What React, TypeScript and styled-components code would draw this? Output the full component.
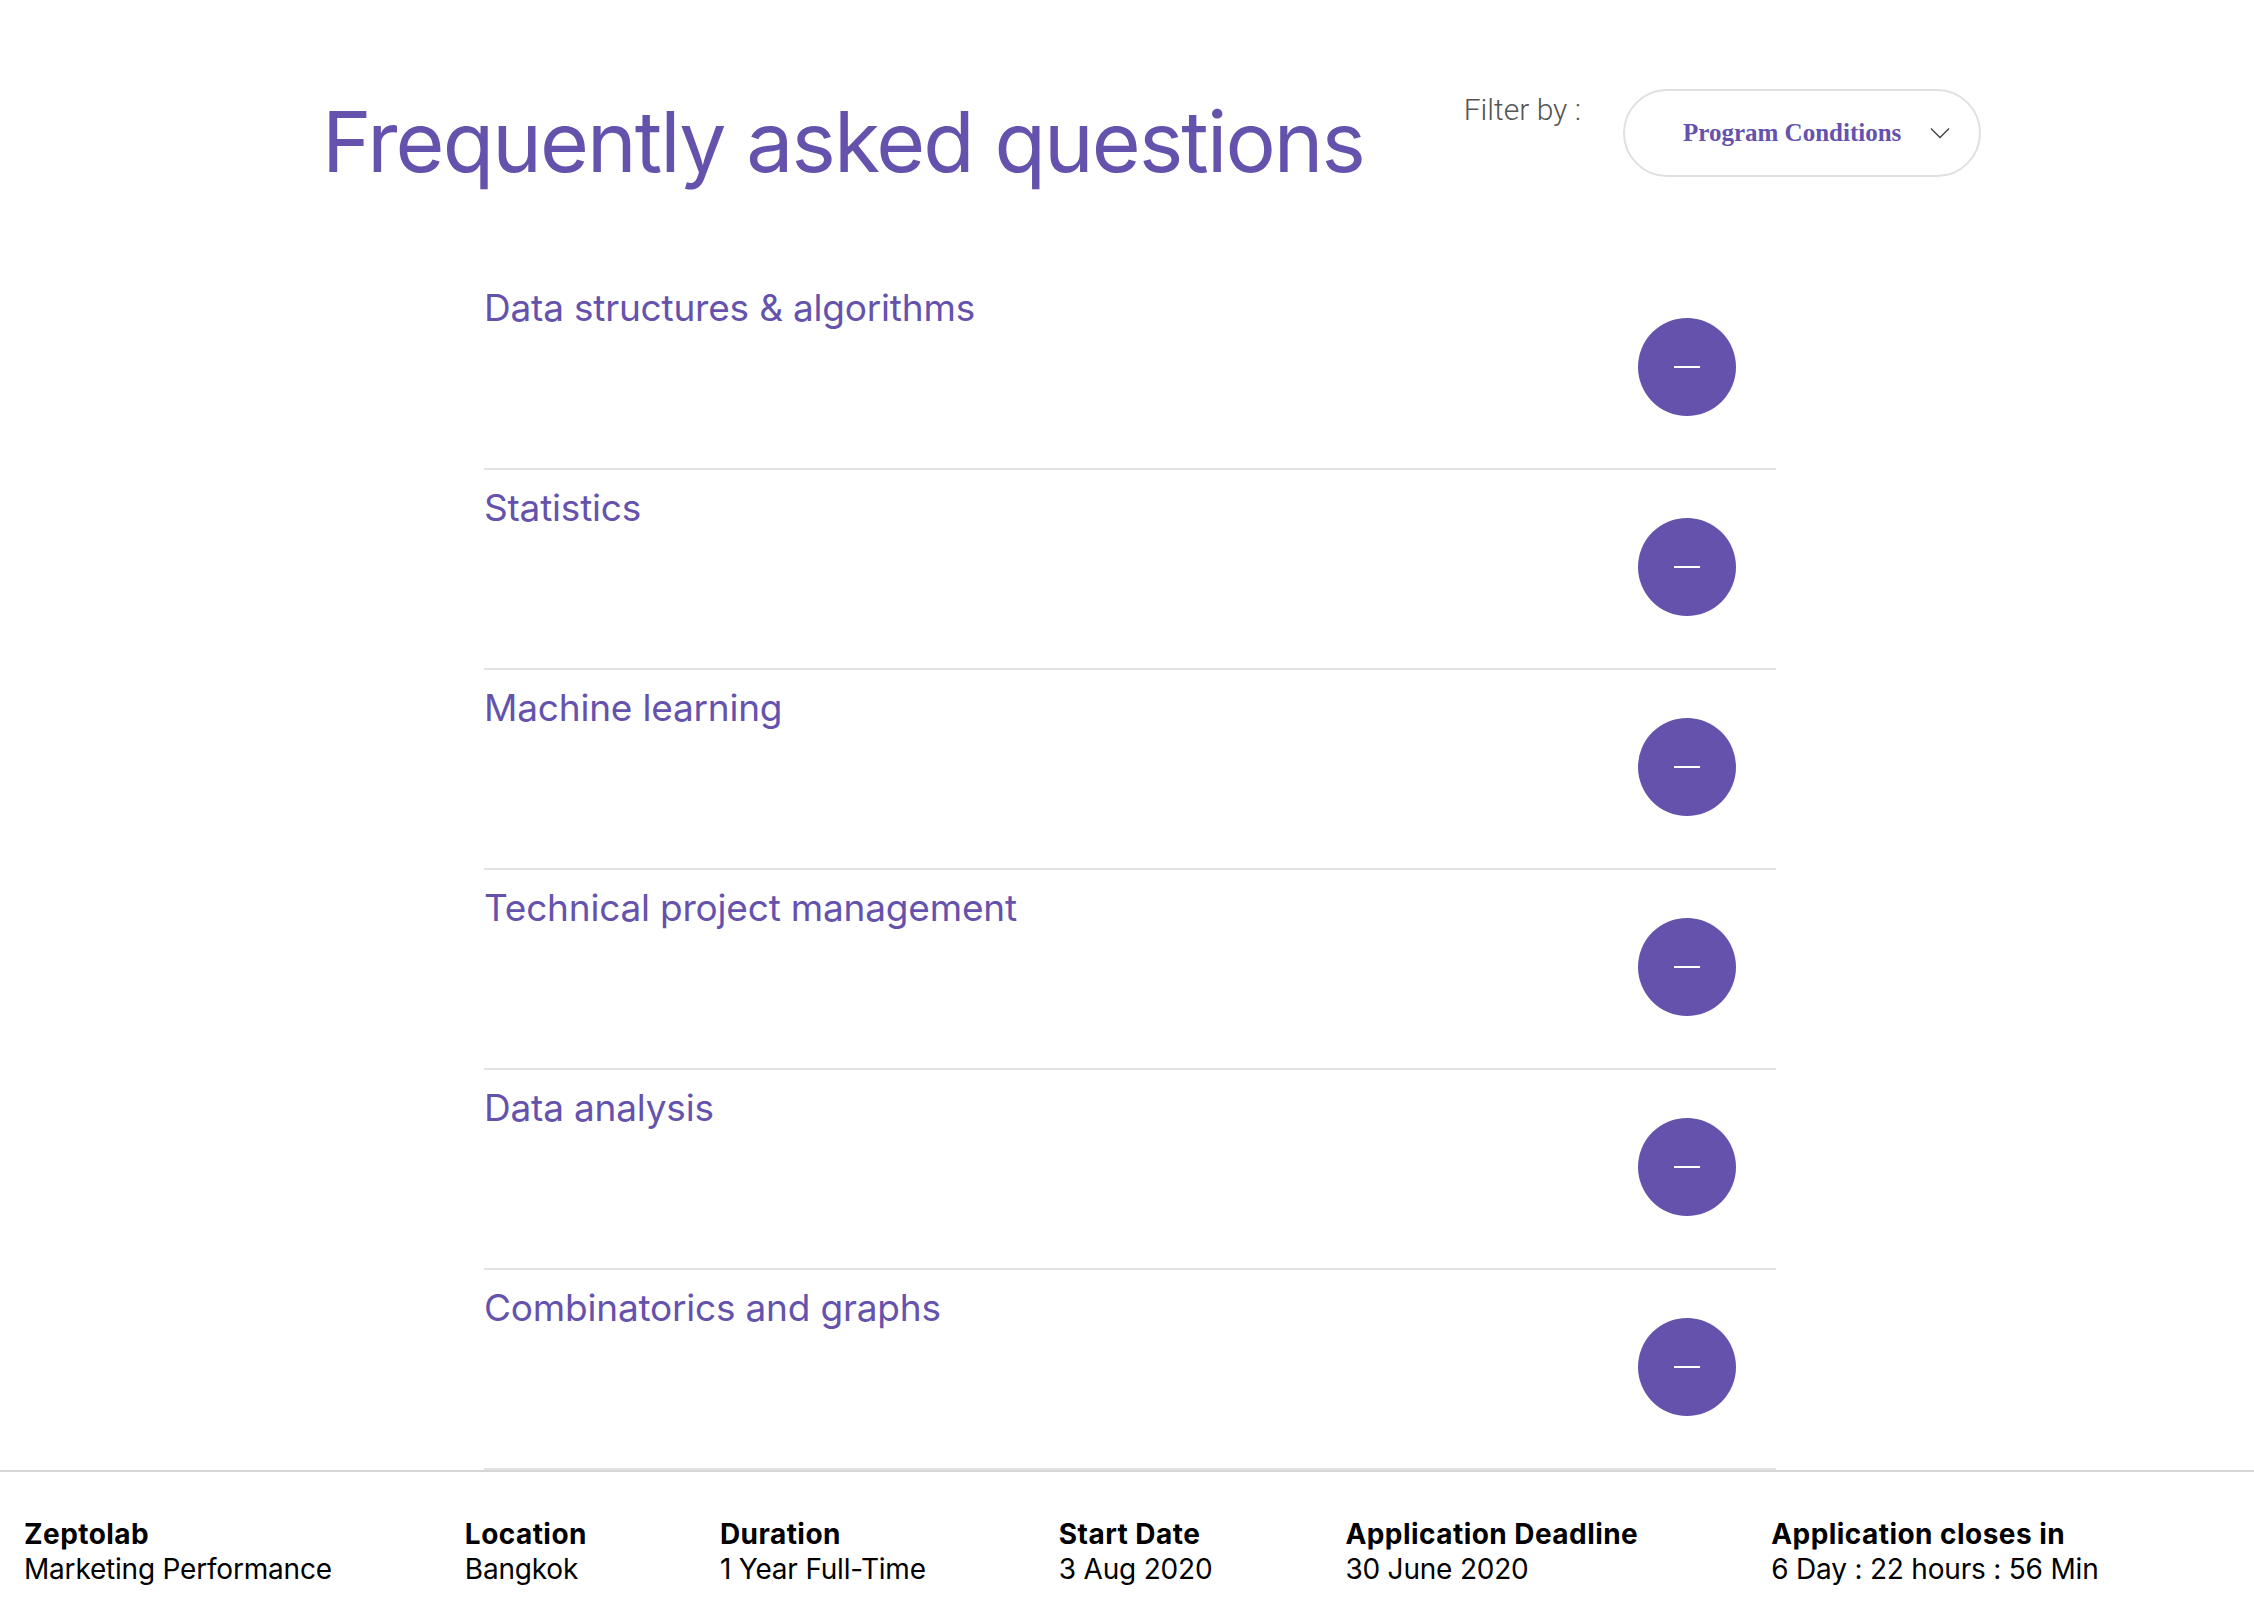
import styled, { createGlobalStyle } from 'styled-components';

// --- Global ---
const GlobalStyle = createGlobalStyle`
  html, body {
    margin: 0;
    padding: 0;
    background: #fff;
  }
  body {
    font-family: 'Inter', 'Liberation Sans', sans-serif;
    color: #000;
  }
  * {
    box-sizing: border-box;
  }
`;

const PURPLE = '#6552ad';

// --- Header ---
const Header = styled.header`
  height: 270px;
  padding: 89px 273px 0 322px;
  display: flex;
  align-items: flex-start;
  justify-content: space-between;
`;

const Title = styled.h1`
  margin: 3px 0 0;
  font-family: 'Inter', 'Liberation Sans', sans-serif;
  font-weight: 400;
  font-size: 84px;
  line-height: 100px;
  letter-spacing: -1.9px;
  color: ${PURPLE};
`;

const FilterGroup = styled.div`
  display: flex;
  align-items: flex-start;
  gap: 42px;
`;

const FilterLabel = styled.span`
  margin-top: 3px;
  font-family: 'Roboto', 'Liberation Sans', sans-serif;
  font-weight: 300;
  font-size: 30px;
  line-height: 36px;
  color: #555;
`;

const Dropdown = styled.button`
  width: 358px;
  height: 88px;
  padding: 0 29px 0 58px;
  border: 2px solid #e0e0e0;
  border-radius: 44px;
  background: #fff;
  display: flex;
  align-items: center;
  justify-content: space-between;
  cursor: pointer;
`;

const DropdownText = styled.span`
  font-family: 'Liberation Serif', 'Times New Roman', serif;
  font-weight: 700;
  font-size: 25px;
  color: ${PURPLE};
`;

// --- FAQ list ---
const List = styled.section`
  width: 1292px;
  margin-left: 484px;
`;

const Row = styled.div`
  height: 200px;
  padding-top: 16px;
  border-bottom: 2px solid #e2e2e2;
  display: flex;
  align-items: flex-start;
  justify-content: space-between;
`;

const Question = styled.h3`
  margin: 0;
  font-family: 'Inter', 'Liberation Sans', sans-serif;
  font-weight: 400;
  font-size: 37px;
  line-height: 44px;
  letter-spacing: -0.2px;
  color: ${PURPLE};
`;

const ToggleButton = styled.button`
  width: 98px;
  height: 98px;
  margin: 32px 40px 0 0;
  border: none;
  border-radius: 50%;
  background: ${PURPLE};
  display: flex;
  align-items: center;
  justify-content: center;
  cursor: pointer;
  flex-shrink: 0;
`;

const Minus = styled.span`
  width: 26px;
  height: 2px;
  background: #fff;
`;

// --- Footer bar ---
const Footer = styled.footer`
  border-top: 2px solid #d6d6d6;
  padding: 45px 24px 0;
  display: flex;
  gap: 133px;
`;

const Info = styled.div`
  display: flex;
  flex-direction: column;
  font-family: 'Inter', 'Liberation Sans', sans-serif;
  font-size: 28px;
  line-height: 35px;
  letter-spacing: -0.2px;
`;

const InfoLabel = styled.span`
  font-weight: 700;
  letter-spacing: 0.45px;
`;

const InfoValue = styled.span`
  font-weight: 400;
`;

const questions = [
  'Data structures & algorithms',
  'Statistics',
  'Machine learning',
  'Technical project management',
  'Data analysis',
  'Combinatorics and graphs',
];

const details = [
  { label: 'Zeptolab', value: 'Marketing Performance' },
  { label: 'Location', value: 'Bangkok' },
  { label: 'Duration', value: '1 Year Full-Time' },
  { label: 'Start Date', value: '3 Aug 2020' },
  { label: 'Application Deadline', value: '30 June 2020' },
  { label: 'Application closes in', value: '6 Day : 22 hours : 56 Min' },
];

export default function App() {
  return (
    <>
      <GlobalStyle />
      <Header>
        <Title>Frequently asked questions</Title>
        <FilterGroup>
          <FilterLabel>Filter by :</FilterLabel>
          <Dropdown aria-label="Filter by">
            <DropdownText>Program Conditions</DropdownText>
            <svg width="20" height="12" viewBox="0 0 20 12" fill="none">
              <path d="M1 1.5 L10 10.5 L19 1.5" stroke="#444" strokeWidth="1.4" />
            </svg>
          </Dropdown>
        </FilterGroup>
      </Header>

      <List>
        {questions.map((q) => (
          <Row key={q}>
            <Question>{q}</Question>
            <ToggleButton aria-label="Collapse">
              <Minus />
            </ToggleButton>
          </Row>
        ))}
      </List>

      <Footer>
        {details.map((d) => (
          <Info key={d.label}>
            <InfoLabel>{d.label}</InfoLabel>
            <InfoValue>{d.value}</InfoValue>
          </Info>
        ))}
      </Footer>
    </>
  );
}
